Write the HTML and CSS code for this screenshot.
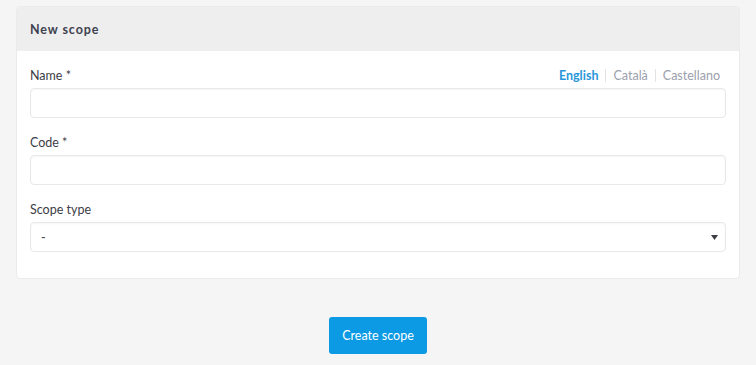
FILE: index.html
```html
<!DOCTYPE html>
<html lang="en">
<head>
<meta charset="utf-8">
<title>New scope</title>
<link rel="stylesheet" href="styles.css">
</head>
<body>
<div class="page">
  <form class="card">
    <div class="card-header"><h2 class="card-title">New scope</h2></div>
    <div class="card-body">
      <div class="field">
        <div class="label-row">
          <label class="label">Name *</label>
          <ul class="tabs">
            <li class="tab active">English</li>
            <li class="tab">Català</li>
            <li class="tab">Castellano</li>
          </ul>
        </div>
        <input class="input" type="text">
      </div>
      <div class="field">
        <div class="label-row"><label class="label">Code *</label></div>
        <input class="input" type="text">
      </div>
      <div class="field">
        <div class="label-row"><label class="label">Scope type</label></div>
        <div class="select">
          <span class="select-value">-</span>
          <svg class="caret" width="7" height="5" viewBox="0 0 7 5"><path d="M0 0h7L3.5 5z" fill="#3d3d45"/></svg>
        </div>
      </div>
    </div>
  </form>
  <div class="actions">
    <button class="button" type="button">Create scope</button>
  </div>
</div>
</body>
</html>
```
FILE: styles.css
```css
* { box-sizing: border-box; }
html, body { margin: 0; padding: 0; }
body {
  background: #f5f5f5;
  font-family: "Source Sans Pro", Lato, "Noto Sans", sans-serif;
  font-size: 12.5px;
  color: #3d3d45;
}
.page {
  padding: 6px 16px 0;
}
.card {
  background: #fff;
  border: 1px solid #ebebeb;
  border-radius: 4px;
  overflow: hidden;
}
.card-header {
  background: #eeeeee;
  height: 44px;
  display: flex;
  align-items: center;
  padding: 0 13px;
}
.card-title {
  margin: 0;
  font-size: 12.5px;
  font-weight: 700;
  letter-spacing: 0.9px;
  color: #3e4250;
}
.card-body {
  padding: 15px 13px 26px;
  display: flex;
  flex-direction: column;
  gap: 15px;
}
.label-row {
  display: flex;
  justify-content: space-between;
  align-items: center;
  height: 18px;
  margin-bottom: 4px;
}
.label {
  font-size: 12.5px;
  color: #3d3d45;
}
.tabs {
  list-style: none;
  margin: 0 6px 0 0;
  padding: 0;
  display: flex;
  align-items: center;
}
.tab {
  font-size: 12.5px;
  color: #9ba0ad;
  padding: 0 7px;
  border-left: 1px solid #e3e3e3;
  line-height: 13px;
}
.tab:first-child { border-left: 0; }
.tab:last-child { padding-right: 0; }
.tab.active {
  color: #2a97db;
  font-weight: 700;
}
.input, .select {
  display: block;
  width: 100%;
  height: 30px;
  border: 1px solid #e8e8e8;
  border-radius: 4px;
  background: #fff;
  box-shadow: inset 0 1px 2px rgba(0,0,0,0.04);
  font: inherit;
}
.select {
  display: flex;
  align-items: center;
  justify-content: space-between;
  padding: 0 7px 0 10px;
}
.select-value { color: #3d3d45; }
.caret { display: block; }
.actions {
  display: flex;
  justify-content: center;
  padding-top: 38px;
}
.button {
  background: #0b9ae3;
  color: #fff;
  border: 0;
  border-radius: 3px;
  height: 37px;
  padding: 0 13px;
  font-family: inherit;
  font-size: 12.5px;
}
```
